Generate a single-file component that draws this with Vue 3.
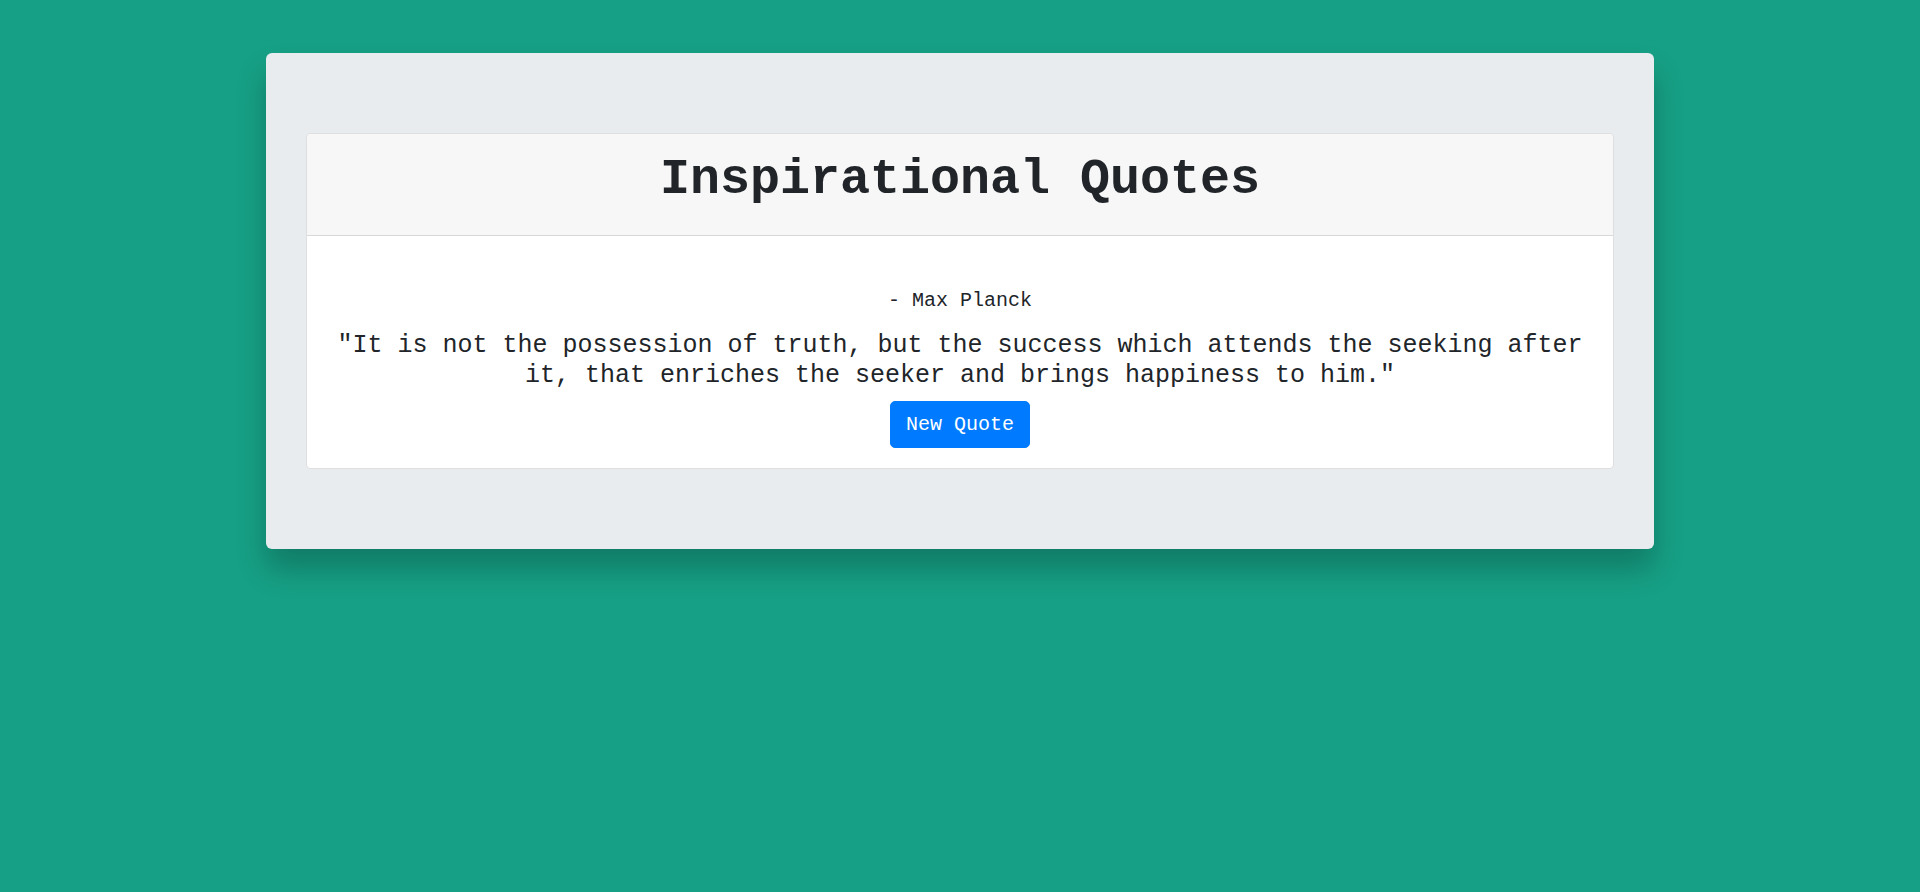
<script setup>
import { ref } from 'vue'

const quotes = [
  {
    author: 'Max Planck',
    text: 'It is not the possession of truth, but the success which attends the seeking after it, that enriches the seeker and brings happiness to him.'
  }
]
const index = ref(0)
function nextQuote() {
  index.value = (index.value + 1) % quotes.length
}
</script>

<template>
  <main class="jumbotron">
    <section class="card">
      <header class="card-header">
        <h1>Inspirational Quotes</h1>
      </header>
      <div class="card-body">
        <p class="author">- {{ quotes[index].author }}</p>
        <h2 class="quote">"{{ quotes[index].text }}"</h2>
        <button type="button" class="btn" @click="nextQuote">New Quote</button>
      </div>
    </section>
  </main>
</template>

<style>
body {
  background: #16a085;
}
</style>

<style scoped>
.jumbotron,
.jumbotron * {
  box-sizing: border-box;
}
.jumbotron {
  width: calc(100% - 532px);
  min-width: 320px;
  margin: 53px auto 64px;
  padding: 80px 40px;
  border-radius: 6px;
  background: #e9ecef;
  box-shadow: 0 20px 30px rgba(0, 0, 0, 0.23);
  font-family: "Courier New", "Liberation Mono", monospace;
  font-size: 20px;
  line-height: 30px;
  color: #212529;
  text-align: center;
}
.card {
  border: 1px solid rgba(0, 0, 0, 0.125);
  border-radius: 5px;
  background: #fff;
  background-clip: border-box;
}
.card-header {
  padding: 16px 25px 15px;
  border-bottom: 1px solid rgba(0, 0, 0, 0.125);
  border-radius: 4px 4px 0 0;
  background: #f7f7f7;
}
h1 {
  margin: 0 0 10px;
  font-size: 50px;
  font-weight: 700;
  line-height: 60px;
}
.card-body {
  padding: 25px 25px 20px;
}
.author {
  margin: 25px 0 15px;
}
.quote {
  margin: 0 0 10px;
  font-size: 25px;
  font-weight: 400;
  line-height: 30px;
}
.btn {
  display: block;
  margin: 0 auto;
  padding: 8px 15px;
  border: 1px solid #007bff;
  border-radius: 5px;
  background: #007bff;
  color: #fff;
  font: inherit;
  line-height: 29px;
  cursor: pointer;
}
</style>
